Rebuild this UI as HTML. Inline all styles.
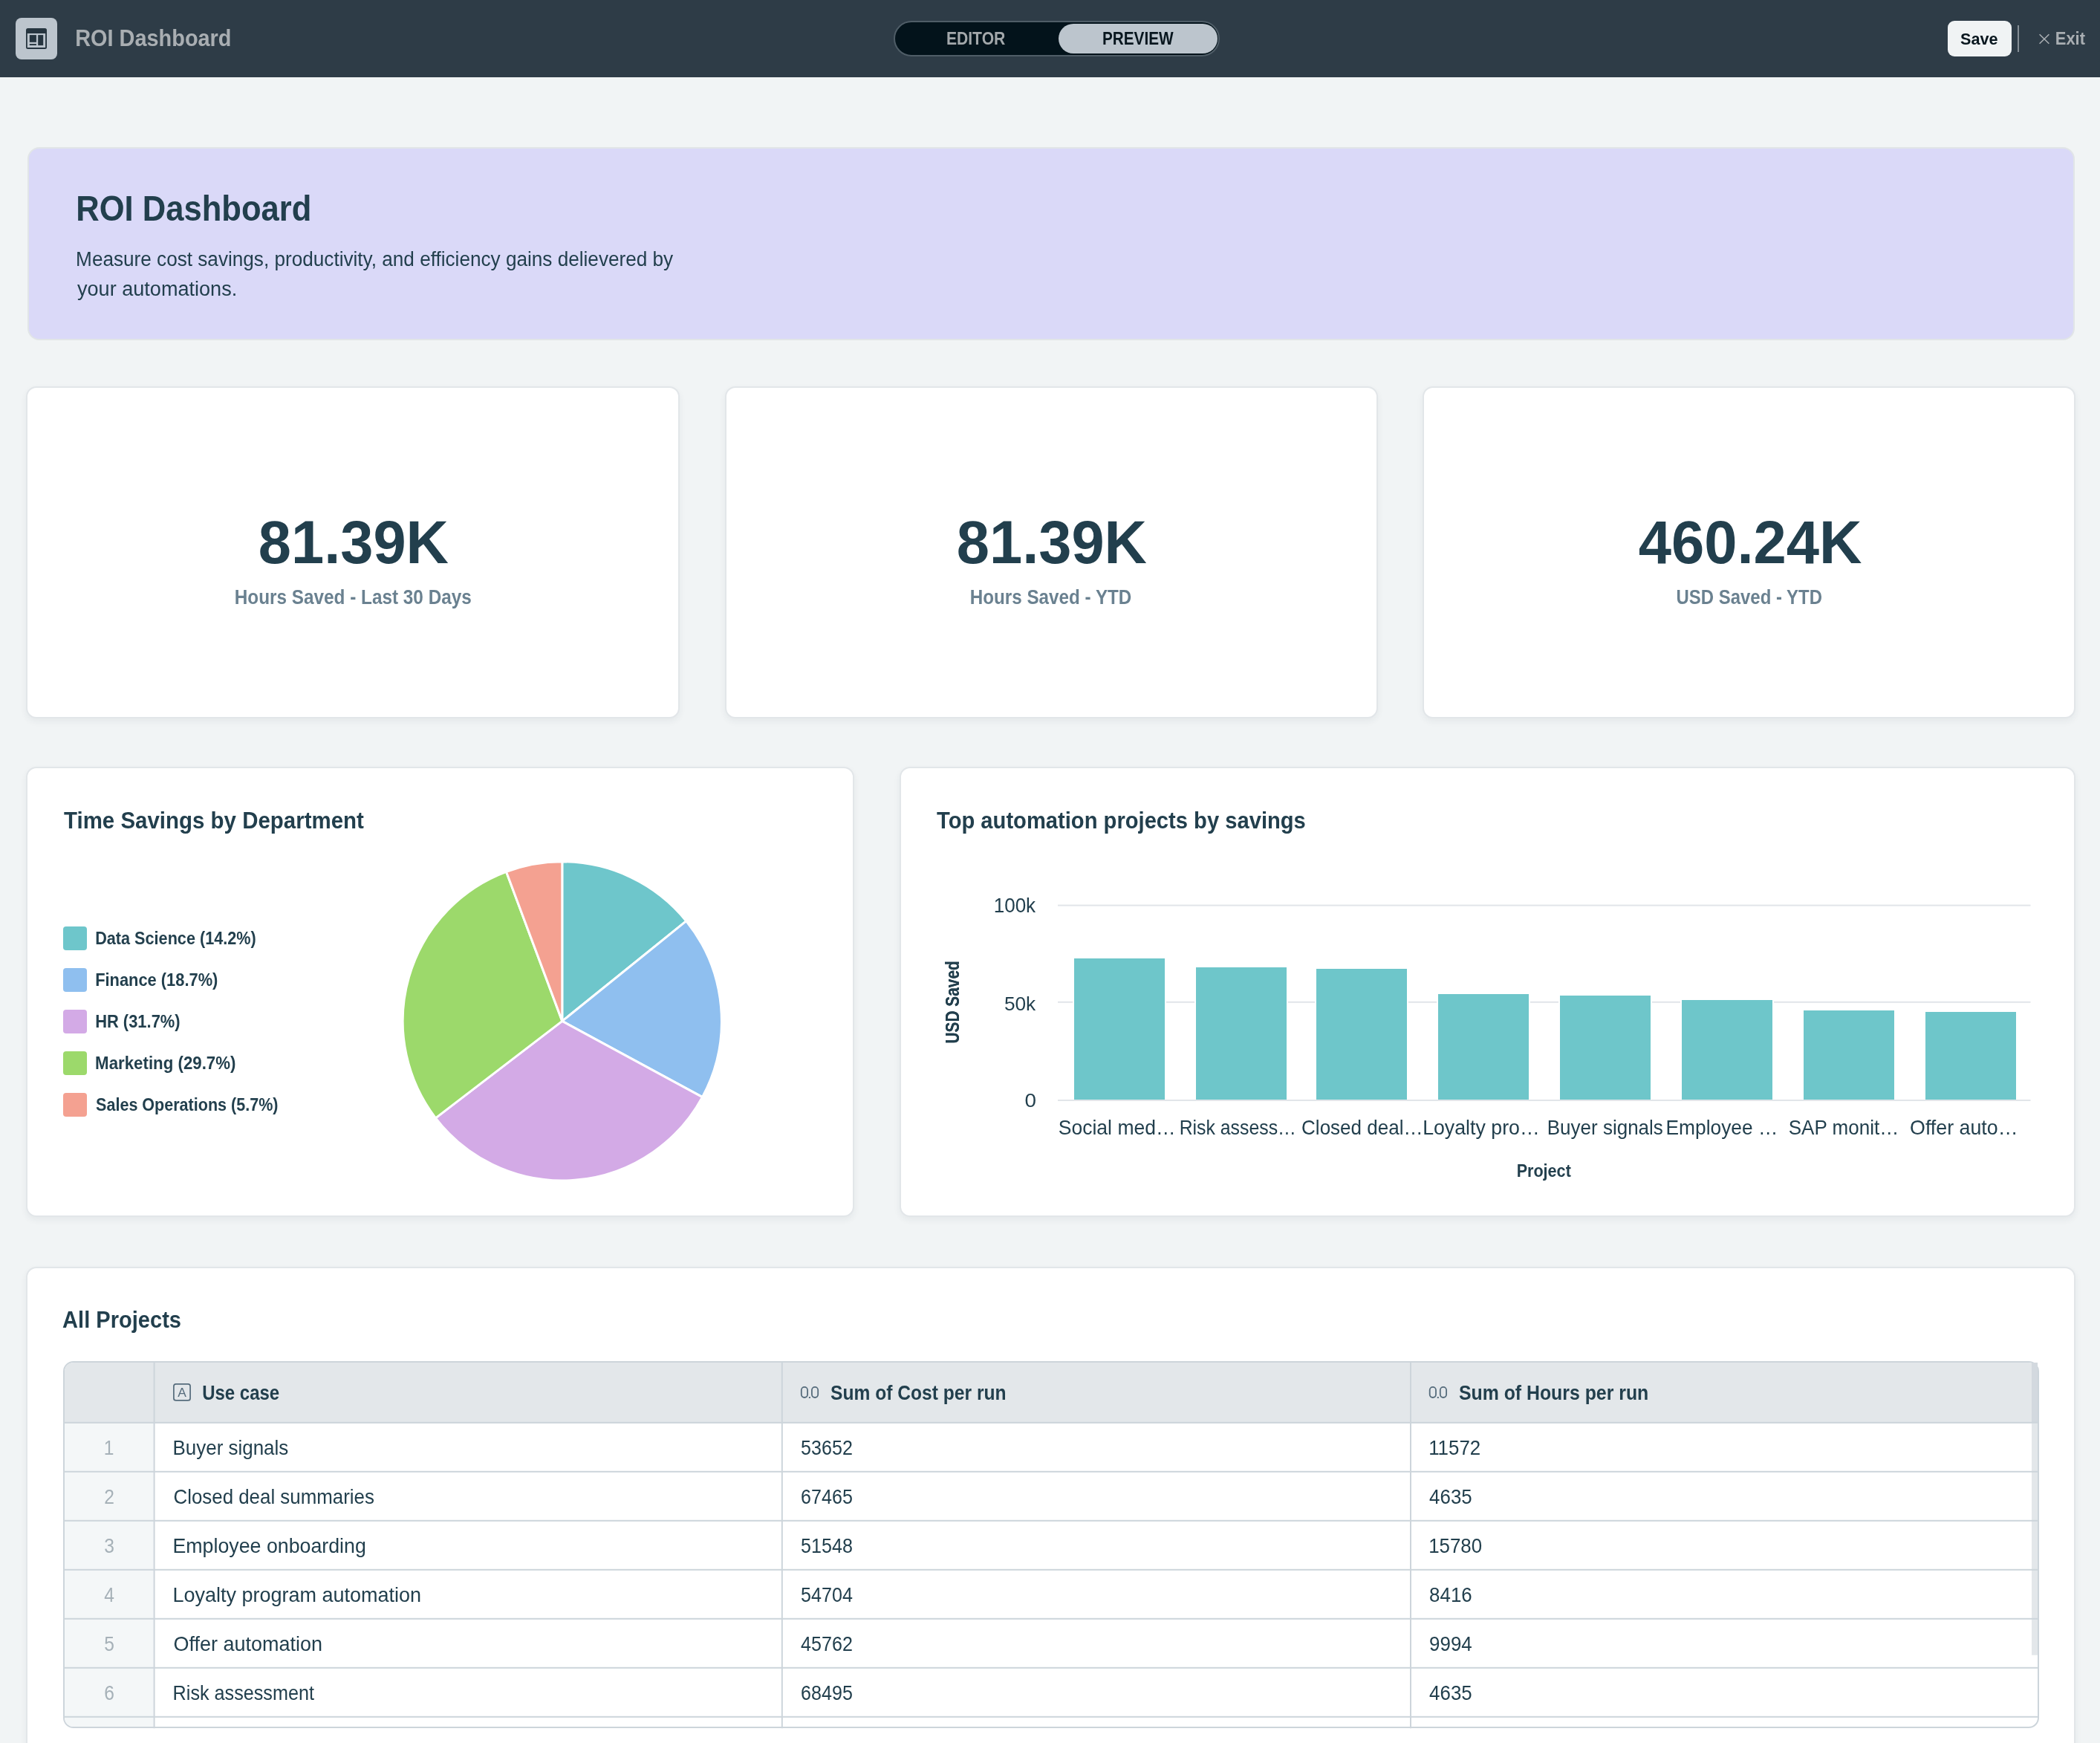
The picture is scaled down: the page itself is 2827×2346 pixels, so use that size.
<!DOCTYPE html><html><head><meta charset="utf-8"><title>ROI Dashboard</title><style>
html,body{margin:0;padding:0}body{width:2827px;height:2346px;position:relative;overflow:hidden;background:#f1f4f5;font-family:"Liberation Sans",sans-serif}
.a{position:absolute;box-sizing:border-box}
.card{position:absolute;box-sizing:border-box;background:#fff;border:2px solid #e2e6e9;border-radius:14px;box-shadow:0 4px 10px rgba(30,50,60,0.06)}
svg{position:absolute;left:0;top:0;will-change:transform}
</style></head><body>
<div class="a" style="left:0;top:0;width:2827px;height:104px;background:#2e3c47"></div>
<div class="a" style="left:21px;top:24px;width:56px;height:56px;border-radius:8px;background:#bcc5cd"></div>
<div class="a" style="left:1203px;top:28px;width:439px;height:47.5px;border-radius:24px;background:#03131b;border:2px solid #4f5d67"></div>
<div class="a" style="left:1424.6px;top:31.9px;width:214.2px;height:40.3px;border-radius:20.2px;background:#bcc5cd"></div>
<div class="a" style="left:2622px;top:28px;width:86px;height:48px;border-radius:9px;background:#f0f3f4"></div>
<div class="a" style="left:2716px;top:34px;width:2px;height:36px;background:#858e95"></div>
<div class="a" style="left:37px;top:198px;width:2756px;height:260px;border-radius:16px;background:#dad9f8;border:2px solid #e1e5e7"></div>
<div class="card" style="left:35px;top:520px;width:880px;height:447px"></div>
<div class="card" style="left:976px;top:520px;width:879px;height:447px"></div>
<div class="card" style="left:1915px;top:520px;width:879px;height:447px"></div>
<div class="card" style="left:35px;top:1032px;width:1114.5px;height:606px"></div>
<div class="card" style="left:1211px;top:1032px;width:1582.5px;height:606px"></div>
<div class="card" style="left:35px;top:1705px;width:2758.5px;height:700px"></div>
<div class="a" style="left:85px;top:1832px;width:2660px;height:494.3px;border-radius:14px;border:2px solid #cdd5db;background:#fff;overflow:hidden">
<div class="a" style="left:0;top:0;width:2660px;height:82px;background:#e3e7ea"></div>
<div class="a" style="left:0;top:82px;width:121px;height:420px;background:#f4f7f8"></div>
</div>
<svg width="2827" height="2346" viewBox="0 0 2827 2346" style="font-family:'Liberation Sans',sans-serif">
<defs><clipPath id="tclip"><rect x="85" y="1832" width="2660" height="494.3" rx="14"/></clipPath></defs>
<text transform="translate(1290.7 1402.8) rotate(-90)" x="-1.68" y="0" font-size="24.85" font-weight="700" fill="#223f4d" textLength="111.19" lengthAdjust="spacingAndGlyphs">USD Saved</text>
<rect x="35" y="38" width="28" height="28" rx="2.5" fill="#26353f"/>
<rect x="36.8" y="45" width="24.3" height="19" fill="#bcc5cd"/>
<rect x="39.8" y="47.1" width="9.1" height="9.7" fill="#26353f"/>
<rect x="39.8" y="59.1" width="9.1" height="1.9" fill="#26353f"/>
<rect x="51.2" y="47.1" width="7" height="14" fill="#26353f"/>
<path d="M2745.6 46.2L2758.4 58.8M2758.4 46.2L2745.6 58.8" stroke="#a9aeb2" stroke-width="1.6" fill="none"/>
<path d="M756.8 1374.4L756.8 1159.8A214.6 214.6 0 0 1 923.86 1239.7Z" fill="#6ec6cb" stroke="#fff" stroke-width="3" stroke-linejoin="round"/>
<path d="M756.8 1374.4L923.86 1239.7A214.6 214.6 0 0 1 945.5 1476.6Z" fill="#8fbfef" stroke="#fff" stroke-width="3" stroke-linejoin="round"/>
<path d="M756.8 1374.4L945.5 1476.6A214.6 214.6 0 0 1 586.41 1504.86Z" fill="#d3aae6" stroke="#fff" stroke-width="3" stroke-linejoin="round"/>
<path d="M756.8 1374.4L586.41 1504.86A214.6 214.6 0 0 1 681.58 1173.42Z" fill="#9cd96b" stroke="#fff" stroke-width="3" stroke-linejoin="round"/>
<path d="M756.8 1374.4L681.58 1173.42A214.6 214.6 0 0 1 756.8 1159.8Z" fill="#f4a191" stroke="#fff" stroke-width="3" stroke-linejoin="round"/>
<rect x="85" y="1247" width="32" height="32" rx="4" fill="#6ec6cb"/>
<rect x="85" y="1303" width="32" height="32" rx="4" fill="#8fbfef"/>
<rect x="85" y="1359" width="32" height="32" rx="4" fill="#d3aae6"/>
<rect x="85" y="1415" width="32" height="32" rx="4" fill="#9cd96b"/>
<rect x="85" y="1471" width="32" height="32" rx="4" fill="#f4a191"/>
<rect x="1424" y="1217.6" width="1309.5" height="2" fill="#e2e5e9"/>
<rect x="1424" y="1347.8" width="1309.5" height="2" fill="#e2e5e9"/>
<rect x="1444" y="1288" width="126" height="192" fill="#fff"/>
<rect x="1446" y="1290" width="122" height="190" fill="#6ec6ca"/>
<rect x="1608" y="1300" width="126" height="180" fill="#fff"/>
<rect x="1610" y="1302" width="122" height="178" fill="#6ec6ca"/>
<rect x="1770" y="1302" width="126" height="178" fill="#fff"/>
<rect x="1772" y="1304" width="122" height="176" fill="#6ec6ca"/>
<rect x="1934" y="1336" width="126" height="144" fill="#fff"/>
<rect x="1936" y="1338" width="122" height="142" fill="#6ec6ca"/>
<rect x="2098" y="1338" width="126" height="142" fill="#fff"/>
<rect x="2100" y="1340" width="122" height="140" fill="#6ec6ca"/>
<rect x="2262" y="1344" width="126" height="136" fill="#fff"/>
<rect x="2264" y="1346" width="122" height="134" fill="#6ec6ca"/>
<rect x="2426" y="1358" width="126" height="122" fill="#fff"/>
<rect x="2428" y="1360" width="122" height="120" fill="#6ec6ca"/>
<rect x="2590" y="1360" width="126" height="120" fill="#fff"/>
<rect x="2592" y="1362" width="122" height="118" fill="#6ec6ca"/>
<rect x="1424" y="1480" width="1309.5" height="2" fill="#e2e5e9"/>
<rect x="2735" y="1834" width="8" height="80" fill="#d3d9df"/>
<rect x="2735" y="1916" width="8" height="311.7" fill="#e3e7ea"/>
<defs><clipPath id="tclip"><rect x="85" y="1832" width="2660" height="494.3" rx="14"/></clipPath></defs>
<text transform="translate(1290.7 1402.8) rotate(-90)" x="-1.68" y="0" font-size="24.85" font-weight="700" fill="#223f4d" textLength="111.19" lengthAdjust="spacingAndGlyphs">USD Saved</text>
<rect x="86" y="1913.8" width="2657" height="2" fill="#cdd5db"/>
<rect x="86" y="1979.8" width="2657" height="2" fill="#cdd5db"/>
<rect x="86" y="2045.8" width="2657" height="2" fill="#cdd5db"/>
<rect x="86" y="2111.8" width="2657" height="2" fill="#cdd5db"/>
<rect x="86" y="2177.8" width="2657" height="2" fill="#cdd5db"/>
<rect x="86" y="2243.8" width="2657" height="2" fill="#cdd5db"/>
<rect x="86" y="2309.8" width="2657" height="2" fill="#cdd5db"/>
<rect x="206.6" y="1833" width="2" height="1491" fill="#cdd5db" clip-path="url(#tclip)"/>
<rect x="1051.8" y="1833" width="2" height="1491" fill="#cdd5db" clip-path="url(#tclip)"/>
<rect x="1898" y="1833" width="2" height="1491" fill="#cdd5db" clip-path="url(#tclip)"/>
<rect x="233.9" y="1862.9" width="22.2" height="22" rx="3" fill="none" stroke="#566c7c" stroke-width="1.7"/>
<text x="239.2" y="1879.9" font-size="16.8" font-weight="400" fill="#566c7c" textLength="11.6" lengthAdjust="spacingAndGlyphs">A</text>
<rect x="1078.8" y="1866.9" width="8.3" height="14.1" rx="4.15" fill="none" stroke="#566c7c" stroke-width="1.8"/>
<rect x="1092.9" y="1866.9" width="8.3" height="14.1" rx="4.15" fill="none" stroke="#566c7c" stroke-width="1.8"/>
<rect x="1088.9" y="1880" width="2" height="2" fill="#566c7c"/>
<rect x="1924.7" y="1866.9" width="8.3" height="14.1" rx="4.15" fill="none" stroke="#566c7c" stroke-width="1.8"/>
<rect x="1938.8" y="1866.9" width="8.3" height="14.1" rx="4.15" fill="none" stroke="#566c7c" stroke-width="1.8"/>
<rect x="1934.8" y="1880" width="2" height="2" fill="#566c7c"/>
<text x="101.18" y="62.4" font-size="31.83" font-weight="700" fill="#a9aeb2" textLength="210.33" lengthAdjust="spacingAndGlyphs">ROI Dashboard</text>
<text x="1273.88" y="60" font-size="23.26" font-weight="700" fill="#a3a8ab" textLength="79.5" lengthAdjust="spacingAndGlyphs">EDITOR</text>
<text x="1483.92" y="60" font-size="23.26" font-weight="700" fill="#08161e" textLength="95.69" lengthAdjust="spacingAndGlyphs">PREVIEW</text>
<text x="2639.04" y="59.8" font-size="22.53" font-weight="700" fill="#08161e" textLength="50.53" lengthAdjust="spacingAndGlyphs">Save</text>
<text x="2766.77" y="60.3" font-size="23.98" font-weight="700" fill="#a9aeb2" textLength="40.2" lengthAdjust="spacingAndGlyphs">Exit</text>
<text x="102.25" y="297" font-size="47.53" font-weight="700" fill="#223f4d" textLength="317.07" lengthAdjust="spacingAndGlyphs">ROI Dashboard</text>
<text x="102.11" y="358" font-size="27.62" font-weight="400" fill="#223f4d" textLength="804.07" lengthAdjust="spacingAndGlyphs">Measure cost savings, productivity, and efficiency gains delievered by</text>
<text x="104" y="397.7" font-size="27.62" font-weight="400" fill="#223f4d" textLength="215.22" lengthAdjust="spacingAndGlyphs">your automations.</text>
<text x="347.86" y="757.5" font-size="81.1" font-weight="700" fill="#223f4d" textLength="256.11" lengthAdjust="spacingAndGlyphs">81.39K</text>
<text x="315.77" y="813.3" font-size="28.05" font-weight="700" fill="#6a8190" textLength="319.01" lengthAdjust="spacingAndGlyphs">Hours Saved - Last 30 Days</text>
<text x="1287.86" y="757.5" font-size="81.1" font-weight="700" fill="#223f4d" textLength="256.11" lengthAdjust="spacingAndGlyphs">81.39K</text>
<text x="1305.77" y="813.3" font-size="28.05" font-weight="700" fill="#6a8190" textLength="217.58" lengthAdjust="spacingAndGlyphs">Hours Saved - YTD</text>
<text x="2205.72" y="757.5" font-size="81.1" font-weight="700" fill="#223f4d" textLength="300.86" lengthAdjust="spacingAndGlyphs">460.24K</text>
<text x="2256.59" y="813.3" font-size="28.05" font-weight="700" fill="#6a8190" textLength="196.39" lengthAdjust="spacingAndGlyphs">USD Saved - YTD</text>
<text x="86" y="1114.5" font-size="31.25" font-weight="700" fill="#223f4d" textLength="403.87" lengthAdjust="spacingAndGlyphs">Time Savings by Department</text>
<text x="128.16" y="1270.8" font-size="23.55" font-weight="700" fill="#223f4d" textLength="216.6" lengthAdjust="spacingAndGlyphs">Data Science (14.2%)</text>
<text x="128.14" y="1326.8" font-size="23.55" font-weight="700" fill="#223f4d" textLength="165.27" lengthAdjust="spacingAndGlyphs">Finance (18.7%)</text>
<text x="128.14" y="1382.8" font-size="23.55" font-weight="700" fill="#223f4d" textLength="114.51" lengthAdjust="spacingAndGlyphs">HR (31.7%)</text>
<text x="128.11" y="1438.8" font-size="23.55" font-weight="700" fill="#223f4d" textLength="189.34" lengthAdjust="spacingAndGlyphs">Marketing (29.7%)</text>
<text x="129.09" y="1494.8" font-size="23.55" font-weight="700" fill="#223f4d" textLength="245.39" lengthAdjust="spacingAndGlyphs">Sales Operations (5.7%)</text>
<text x="1261" y="1115" font-size="31.4" font-weight="700" fill="#223f4d" textLength="496.83" lengthAdjust="spacingAndGlyphs">Top automation projects by savings</text>
<text x="1337.67" y="1228.2" font-size="27.03" font-weight="400" fill="#223f4d" textLength="56.5" lengthAdjust="spacingAndGlyphs">100k</text>
<text x="1351.91" y="1360" font-size="26.45" font-weight="400" fill="#223f4d" textLength="42.33" lengthAdjust="spacingAndGlyphs">50k</text>
<text x="1379.62" y="1490.3" font-size="25.87" font-weight="400" fill="#223f4d" textLength="15.47" lengthAdjust="spacingAndGlyphs">0</text>
<text x="1424.78" y="1526.6" font-size="27.03" font-weight="400" fill="#223f4d" textLength="157.74" lengthAdjust="spacingAndGlyphs">Social med…</text>
<text x="1587.66" y="1526.6" font-size="27.03" font-weight="400" fill="#223f4d" textLength="157.23" lengthAdjust="spacingAndGlyphs">Risk assess…</text>
<text x="1752.09" y="1526.6" font-size="27.03" font-weight="400" fill="#223f4d" textLength="163.41" lengthAdjust="spacingAndGlyphs">Closed deal…</text>
<text x="1915.14" y="1526.6" font-size="27.03" font-weight="400" fill="#223f4d" textLength="157.53" lengthAdjust="spacingAndGlyphs">Loyalty pro…</text>
<text x="2082.78" y="1526.6" font-size="27.03" font-weight="400" fill="#223f4d" textLength="156.07" lengthAdjust="spacingAndGlyphs">Buyer signals</text>
<text x="2242.57" y="1526.6" font-size="27.03" font-weight="400" fill="#223f4d" textLength="150.72" lengthAdjust="spacingAndGlyphs">Employee …</text>
<text x="2407.7" y="1526.6" font-size="27.03" font-weight="400" fill="#223f4d" textLength="148.51" lengthAdjust="spacingAndGlyphs">SAP monit…</text>
<text x="2571.07" y="1526.6" font-size="27.03" font-weight="400" fill="#223f4d" textLength="145.45" lengthAdjust="spacingAndGlyphs">Offer auto…</text>
<text x="2041.64" y="1584" font-size="23.26" font-weight="700" fill="#223f4d" textLength="73.2" lengthAdjust="spacingAndGlyphs">Project</text>
<text x="84.1" y="1787" font-size="32.27" font-weight="700" fill="#223f4d" textLength="159.88" lengthAdjust="spacingAndGlyphs">All Projects</text>
<text x="272.22" y="1884" font-size="26.89" font-weight="700" fill="#223f4d" textLength="103.99" lengthAdjust="spacingAndGlyphs">Use case</text>
<text x="1118.11" y="1883.8" font-size="27.62" font-weight="700" fill="#223f4d" textLength="236.42" lengthAdjust="spacingAndGlyphs">Sum of Cost per run</text>
<text x="1963.9" y="1883.8" font-size="27.62" font-weight="700" fill="#223f4d" textLength="255.4" lengthAdjust="spacingAndGlyphs">Sum of Hours per run</text>
<text x="232.55" y="1958.4" font-size="28.05" font-weight="400" fill="#223f4d" textLength="155.72" lengthAdjust="spacingAndGlyphs">Buyer signals</text>
<text x="1078.11" y="1958.4" font-size="28.05" font-weight="400" fill="#223f4d" textLength="69.79" lengthAdjust="spacingAndGlyphs">53652</text>
<text x="1923.15" y="1958.4" font-size="28.05" font-weight="400" fill="#223f4d" textLength="70.1" lengthAdjust="spacingAndGlyphs">11572</text>
<text x="139.84" y="1958.4" font-size="26.74" font-weight="400" fill="#a6b1b8" textLength="13.69" lengthAdjust="spacingAndGlyphs">1</text>
<text x="233.48" y="2024.4" font-size="28.05" font-weight="400" fill="#223f4d" textLength="270.4" lengthAdjust="spacingAndGlyphs">Closed deal summaries</text>
<text x="1078.11" y="2024.4" font-size="28.05" font-weight="400" fill="#223f4d" textLength="69.79" lengthAdjust="spacingAndGlyphs">67465</text>
<text x="1924.08" y="2024.4" font-size="28.05" font-weight="400" fill="#223f4d" textLength="57.62" lengthAdjust="spacingAndGlyphs">4635</text>
<text x="140.3" y="2024.4" font-size="26.74" font-weight="400" fill="#a6b1b8" textLength="13.69" lengthAdjust="spacingAndGlyphs">2</text>
<text x="232.49" y="2090.4" font-size="28.05" font-weight="400" fill="#223f4d" textLength="260.3" lengthAdjust="spacingAndGlyphs">Employee onboarding</text>
<text x="1078.11" y="2090.4" font-size="28.05" font-weight="400" fill="#223f4d" textLength="69.79" lengthAdjust="spacingAndGlyphs">51548</text>
<text x="1923.15" y="2090.4" font-size="28.05" font-weight="400" fill="#223f4d" textLength="72.02" lengthAdjust="spacingAndGlyphs">15780</text>
<text x="140.3" y="2090.4" font-size="26.74" font-weight="400" fill="#a6b1b8" textLength="13.69" lengthAdjust="spacingAndGlyphs">3</text>
<text x="232.47" y="2156.4" font-size="28.05" font-weight="400" fill="#223f4d" textLength="334.62" lengthAdjust="spacingAndGlyphs">Loyalty program automation</text>
<text x="1078.11" y="2156.4" font-size="28.05" font-weight="400" fill="#223f4d" textLength="69.79" lengthAdjust="spacingAndGlyphs">54704</text>
<text x="1924.08" y="2156.4" font-size="28.05" font-weight="400" fill="#223f4d" textLength="57.62" lengthAdjust="spacingAndGlyphs">8416</text>
<text x="140.3" y="2156.4" font-size="26.74" font-weight="400" fill="#a6b1b8" textLength="13.69" lengthAdjust="spacingAndGlyphs">4</text>
<text x="233.44" y="2222.4" font-size="28.05" font-weight="400" fill="#223f4d" textLength="200.52" lengthAdjust="spacingAndGlyphs">Offer automation</text>
<text x="1078.11" y="2222.4" font-size="28.05" font-weight="400" fill="#223f4d" textLength="69.79" lengthAdjust="spacingAndGlyphs">45762</text>
<text x="1924.08" y="2222.4" font-size="28.05" font-weight="400" fill="#223f4d" textLength="57.62" lengthAdjust="spacingAndGlyphs">9994</text>
<text x="140.3" y="2222.4" font-size="26.74" font-weight="400" fill="#a6b1b8" textLength="13.69" lengthAdjust="spacingAndGlyphs">5</text>
<text x="232.6" y="2288.4" font-size="28.05" font-weight="400" fill="#223f4d" textLength="190.37" lengthAdjust="spacingAndGlyphs">Risk assessment</text>
<text x="1078.11" y="2288.4" font-size="28.05" font-weight="400" fill="#223f4d" textLength="69.79" lengthAdjust="spacingAndGlyphs">68495</text>
<text x="1924.08" y="2288.4" font-size="28.05" font-weight="400" fill="#223f4d" textLength="57.62" lengthAdjust="spacingAndGlyphs">4635</text>
<text x="140.3" y="2288.4" font-size="26.74" font-weight="400" fill="#a6b1b8" textLength="13.69" lengthAdjust="spacingAndGlyphs">6</text>
</svg>
</body></html>
